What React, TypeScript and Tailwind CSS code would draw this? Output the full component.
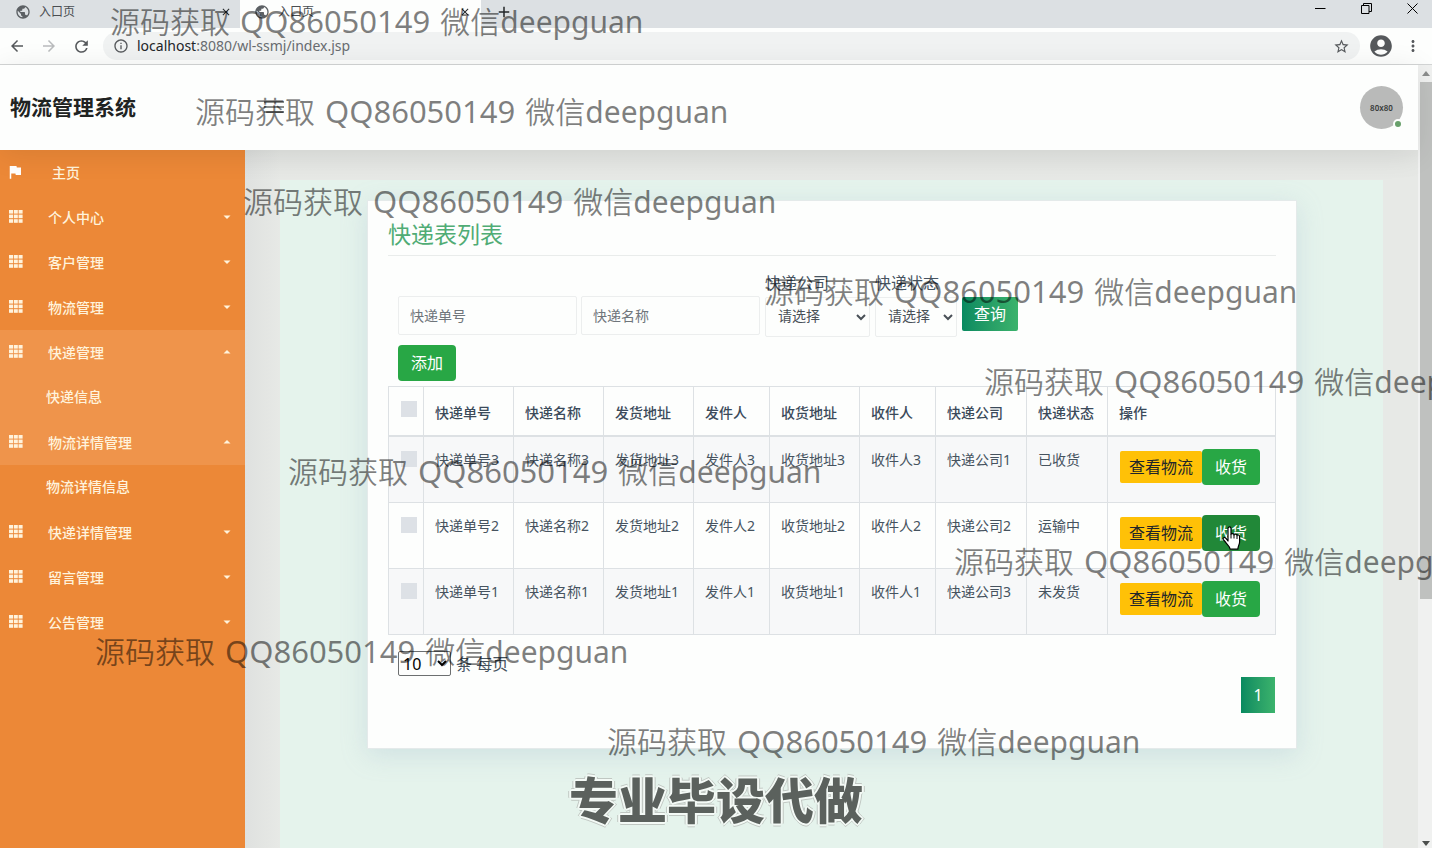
import React from "react";
import {
  MdAccountCircle,
  MdAdd,
  MdArrowBack,
  MdArrowForward,
  MdClose,
  MdFlag,
  MdInfoOutline,
  MdMoreVert,
  MdPublic,
  MdRefresh,
  MdStarBorder,
} from "react-icons/md";

type MenuItem = { label: string; open?: boolean; highlight?: boolean; child?: string; childHighlight?: boolean };

const menu: MenuItem[] = [
  { label: "个人中心" },
  { label: "客户管理" },
  { label: "物流管理" },
  { label: "快递管理", open: true, highlight: true, child: "快递信息", childHighlight: true },
  { label: "物流详情管理", open: true, highlight: true, child: "物流详情信息" },
  { label: "快递详情管理" },
  { label: "留言管理" },
  { label: "公告管理" },
];

const columns = ["快递单号", "快递名称", "发货地址", "发件人", "收货地址", "收件人", "快递公司", "快递状态"];

const rows = [
  ["快递单号3", "快递名称3", "发货地址3", "发件人3", "收货地址3", "收件人3", "快递公司1", "已收货"],
  ["快递单号2", "快递名称2", "发货地址2", "发件人2", "收货地址2", "收件人2", "快递公司2", "运输中"],
  ["快递单号1", "快递名称1", "发货地址1", "发件人1", "收货地址1", "收件人1", "快递公司3", "未发货"],
];

const marks = [
  "left-[110px] top-0",
  "left-[195px] top-[90px]",
  "left-[243px] top-[180px]",
  "left-[764px] top-[270px]",
  "left-[984px] top-[360px]",
  "left-[288px] top-[450px]",
  "left-[954px] top-[540px]",
  "left-[95px] top-[630px]",
  "left-[607px] top-[720px]",
];

function GridIcon() {
  return (
    <svg width="14" height="13" viewBox="0 0 14 13" fill="currentColor" aria-hidden="true">
      {[0, 4.6, 9.2].map((y) =>
        [0, 4.8, 9.6].map((x) => <rect key={`${x}-${y}`} x={x} y={y} width="4" height="3.6" />),
      )}
    </svg>
  );
}

function Caret({ up }: { up?: boolean }) {
  return (
    <svg width="8" height="4" viewBox="0 0 8 4" fill="currentColor" aria-hidden="true">
      <path d={up ? "M0.5 3.5 4 0l3.5 3.5z" : "M0.5 0.5 4 4l3.5-3.5z"} />
    </svg>
  );
}

function HandCursor() {
  return (
    <svg className="pointer-events-none absolute left-5 top-[11px]" width="19" height="25" viewBox="0 0 19 25" aria-hidden="true">
      <path
        d="M6 15V2.600C6 .4 9 .4 9 2.600V8.500c0-1.300 3-1.200 3 .5 0-1.300 3-1.200 3 .7 0-1.200 2.600-1 2.600.8V16c0 2.500-1.600 3.800-1.800 7.200H8.200C8 20.500 5 18.500 3.800 16.500L1.400 13.600c-1-1.700 1-2.900 2.300-1.500z"
        fill="#fff"
        stroke="#000"
        strokeWidth="1.2"
        strokeLinejoin="round"
      />
      <path d="M9 8.500V12.500M12 9v3.500M15 10V13" stroke="#000" strokeWidth="1" />
    </svg>
  );
}

function Tab({ active }: { active?: boolean }) {
  return (
    <div
      className={
        active
          ? "flex w-[241px] items-center bg-[#fdfefd] pl-3.5 pr-2.5"
          : "flex w-60 items-center pl-[15px] pr-2"
      }
    >
      <MdPublic className="size-4 text-[#5c6064]" />
      <span className="ml-2 flex-1 text-xs text-[#4a4e52]">入口页</span>
      <button type="button" aria-label="关闭标签页" className="text-[#24272a]">
        <MdClose className="size-3" />
      </button>
    </div>
  );
}

function BrowserBar() {
  return (
    <div className="shrink-0">
      <div className="flex h-7 bg-[#dce0e3]">
        <div className="flex h-6 flex-1">
          <Tab />
          <div className="-mb-1 flex bg-[#fdfefd] pb-1">
            <Tab active />
          </div>
          <button type="button" aria-label="新标签页" className="ml-3.5 text-[#24272a]">
            <MdAdd className="size-[18px]" />
          </button>
        </div>
        <div className="flex h-4 items-center gap-[35px] pr-3.5 text-black">
          <button type="button" aria-label="最小化">
            <svg width="11" height="11" viewBox="0 0 11 11" fill="none" stroke="currentColor"><path d="M0 5.500H10.500" /></svg>
          </button>
          <button type="button" aria-label="还原">
            <svg width="11" height="11" viewBox="0 0 11 11" fill="none" stroke="currentColor"><path d="M.5 2.500h7.500v8H.5zM2.500 2.500V.5h8v8H8" /></svg>
          </button>
          <button type="button" aria-label="关闭">
            <svg width="11" height="11" viewBox="0 0 11 11" fill="none" stroke="currentColor"><path d="M.5.5l10 10M10.500.5l-10 10" /></svg>
          </button>
        </div>
      </div>
      <div className="flex h-[37px] items-center border-b border-[#d3d5d5] bg-[#fdfefd] pl-2 pr-2.5 text-[#56595c]">
        <button type="button" aria-label="后退"><MdArrowBack className="size-[18px]" /></button>
        <button type="button" aria-label="前进" className="ml-3.5 text-[#b9bbbd]"><MdArrowForward className="size-[18px]" /></button>
        <button type="button" aria-label="刷新" className="ml-3.5"><MdRefresh className="size-[19px]" /></button>
        <div className="ml-3 flex h-7 flex-1 items-center rounded-full bg-[#f0f2f2] px-2.5">
          <MdInfoOutline className="size-4" />
          <p className="ml-2 flex-1 text-sm text-[#686c70]">
            <span className="text-[#222528]">localhost</span>:8080/wl-ssmj/index.jsp
          </p>
          <button type="button" aria-label="收藏"><MdStarBorder className="size-[17px]" /></button>
        </div>
        <button type="button" aria-label="账户" className="ml-2"><MdAccountCircle className="size-[26px]" /></button>
        <button type="button" aria-label="菜单" className="ml-2.5"><MdMoreVert className="size-[18px]" /></button>
      </div>
    </div>
  );
}

function Sidebar() {
  return (
    <nav className="w-[245px] shrink-0 bg-[#ec8837] text-sm font-medium text-[#fff3dc]">
      <a href="#home" className="flex h-[45px] items-center pl-1.5">
        <MdFlag className="mb-0.5 size-[18px] text-white" />
        <span className="ml-7">主页</span>
      </a>
      {menu.map((item) => (
        <div key={item.label}>
          <button
            type="button"
            aria-expanded={!!item.open}
            className={
              item.highlight
                ? "flex h-[45px] w-full items-center bg-[#ef944b] pl-[9px] pr-3.5"
                : "flex h-[45px] w-full items-center pl-[9px] pr-3.5"
            }
          >
            <span className="pb-0.5"><GridIcon /></span>
            <span className="ml-[25px] flex-1 text-left">{item.label}</span>
            <span className="pb-0.5"><Caret up={item.open} /></span>
          </button>
          {item.child && (
            <a
              href="#sub"
              className={
                item.childHighlight
                  ? "flex h-[45px] items-center bg-[#ef944b] pb-0.5 pl-[46px]"
                  : "flex h-[45px] items-center pb-0.5 pl-[46px]"
              }
            >
              {item.child}
            </a>
          )}
        </div>
      ))}
    </nav>
  );
}

function Filters() {
  const inputClass =
    "h-[39px] w-[179px] rounded-xs border border-[#eceeee] bg-transparent px-[11px] text-sm text-[#495057] placeholder:text-[#6f757b]";
  return (
    <form className="flex items-end gap-[5px] pl-2.5" onSubmit={(e) => e.preventDefault()}>
      <div className="flex gap-1 pb-0.5">
        <input aria-label="快递单号" placeholder="快递单号" className={inputClass} />
        <input aria-label="快递名称" placeholder="快递名称" className={inputClass} />
      </div>
      <label className="flex flex-col text-base leading-6">
        快递公司
        <select className="mt-0.5 h-10 w-[105px] rounded-xs border border-[#eceeee] bg-transparent px-2 pb-1 text-sm text-[#495057]">
          <option>请选择</option>
        </select>
      </label>
      <label className="flex flex-col text-base leading-6">
        快递状态
        <select className="mt-0.5 h-10 w-[82px] rounded-xs border border-[#eceeee] bg-transparent px-2 pb-1 text-sm text-[#495057]">
          <option>请选择</option>
        </select>
      </label>
      <div className="pb-1.5">
        <button type="submit" className="h-[34px] w-14 rounded-xs bg-linear-to-r from-[#078a60] to-[#3bb36c] text-base text-white">
          查询
        </button>
      </div>
    </form>
  );
}

function Check({ label }: { label: string }) {
  return <input type="checkbox" aria-label={label} className="block size-4 appearance-none bg-[#dde1e6]" />;
}

function ExpressTable() {
  return (
    <table className="w-full table-fixed border-collapse text-left text-sm text-[#46535f]">
      <colgroup>
        <col className="w-[35px]" />
        <col className="w-[90px]" />
        <col className="w-[90px]" />
        <col className="w-[90px]" />
        <col className="w-[76px]" />
        <col className="w-[90px]" />
        <col className="w-[76px]" />
        <col className="w-[91px]" />
        <col className="w-[81px]" />
        <col />
      </colgroup>
      <thead>
        <tr className="h-[49px]">
          <th className="border border-b-2 border-[#dde1e4] pb-1 pl-3"><Check label="全选" /></th>
          {columns.map((c) => (
            <th key={c} className="whitespace-nowrap border border-b-2 border-[#dde1e4] pl-[11px] pt-1 font-medium text-[#3b4a5a]">
              {c}
            </th>
          ))}
          <th className="border border-b-2 border-[#dde1e4] pl-[11px] pt-1 font-medium text-[#3b4a5a]">操作</th>
        </tr>
      </thead>
      <tbody>
        {rows.map((r, i) => (
          <tr key={r[0]} className="h-[66px] odd:bg-[#f7f8f9] first:h-[67px]">
            <td className="border border-[#dde1e4] pl-3 pt-3.5 align-top"><Check label={r[0]} /></td>
            {r.map((c) => (
              <td key={c} className="whitespace-nowrap border border-[#dde1e4] pl-[11px] pt-[13px] align-top">{c}</td>
            ))}
            <td className="border border-[#dde1e4] pl-3 pt-3 align-top">
              <div className="flex items-center">
                <button type="button" className="h-8 w-[82px] rounded-xs bg-[#ffc107] text-base text-[#212529]">
                  查看物流
                </button>
                <div className="relative">
                  <button
                    type="button"
                    className={
                      i === 1
                        ? "h-9 w-[58px] rounded-sm bg-[#218838] text-base text-white"
                        : "h-9 w-[58px] rounded-sm bg-[#28a745] text-base text-white"
                    }
                  >
                    收货
                  </button>
                  {i === 1 && <HandCursor />}
                </div>
              </div>
            </td>
          </tr>
        ))}
      </tbody>
    </table>
  );
}

export default function App() {
  return (
    <div className="relative flex h-screen flex-col overflow-hidden bg-[#fdfefd] font-['Noto_Sans','Noto_Sans_CJK_SC',sans-serif] text-[#46535f]">
      <BrowserBar />
      <div className="flex min-h-0 flex-1">
        <div className="flex min-w-0 flex-1 flex-col">
          <header className="relative flex h-[85px] shrink-0 items-center bg-[#fdfefd] pl-2.5 pr-[15px] shadow-[0_4px_30px_rgba(0,0,0,0.09)]">
            <h1 className="w-[254px] text-[21px] font-bold text-[#202322]">物流管理系统</h1>
            <button type="button" aria-label="切换菜单" className="text-[#8a8d8b]">
              <svg width="20" height="13" viewBox="0 0 20 13" fill="none" stroke="currentColor" strokeWidth="2" aria-hidden="true">
                <path d="M0 1h20M0 6h20M0 11h20" />
              </svg>
            </button>
            <div className="relative ml-auto flex size-[43px] items-center justify-center rounded-full bg-[#b9bab9] text-[8px] font-semibold text-[#383a39]">
              80x80
              <span className="absolute bottom-0 right-0 size-2.5 rounded-full border-2 border-[#fdfefd] bg-[#68a06b]" />
            </div>
          </header>
          <div className="flex min-h-0 flex-1">
            <Sidebar />
            <main className="flex min-w-0 flex-1 bg-[linear-gradient(to_bottom,rgba(0,0,0,0.02),transparent_30px),linear-gradient(to_right,#dfe1df,#e7e9e6_35px)] px-[35px] pt-[30px]">
              <div className="flex-1 bg-[#e5f3ec] pl-[87px] pr-[86px] pt-5">
                <section className="border border-[#e4eaea] bg-[#fdfefd] px-5 pb-[35px] pt-4 shadow-[0_6px_24px_rgba(150,180,200,0.28)]">
                  <h2 className="border-b border-[#e9eceb] pb-1 text-[23px] leading-[34px] text-[#50ac75]">快递表列表</h2>
                  <div className="pt-[15px]">
                    <Filters />
                  </div>
                  <div className="pb-[5px] pl-2.5 pt-2">
                    <button type="button" className="block h-9 w-[58px] rounded-sm bg-[#28a745] text-base text-white">
                      添加
                    </button>
                  </div>
                  <ExpressTable />
                  <label className="mb-px mt-4 flex items-center gap-[5px] pl-2.5 text-base">
                    <select className="h-[25px] w-[53px] rounded-xs border border-[#6c6f70] bg-transparent text-base text-black">
                      <option>10</option>
                    </select>
                    条 每页
                  </label>
                  <div className="flex justify-end pr-px">
                    <button type="button" className="h-9 w-[34px] bg-linear-to-r from-[#078a60] to-[#3bb36c] text-base text-white">
                      1
                    </button>
                  </div>
                </section>
              </div>
            </main>
          </div>
        </div>
        <div className="flex w-3.5 shrink-0 flex-col items-center bg-[#f0f1f0] pl-0.5">
          <svg className="my-1.5 shrink-0" width="8" height="5" viewBox="0 0 8 5" fill="#8b8d8c" aria-hidden="true"><path d="M0 5 4 0l4 5z" /></svg>
          <div className="h-[66%] w-full bg-[#bfc1bf]" />
          <svg className="mb-0.5 mt-auto shrink-0" width="8" height="5" viewBox="0 0 8 5" fill="#4c4f4d" aria-hidden="true"><path d="M0 0 4 5l4-5z" /></svg>
        </div>
      </div>

      <div className="pointer-events-none absolute inset-0 overflow-hidden">
        {marks.map((m) => (
          <p key={m} className={`absolute flex items-baseline gap-2.5 whitespace-nowrap text-[30px] font-[350] leading-[42px] text-black/50 ${m}`}>
            <span>源码获取</span>
            <span className="text-[31px] font-normal">QQ86050149</span>
            <span>
              微信<span className="font-normal">deepguan</span>
            </span>
          </p>
        ))}
        <p className="absolute inset-x-0 bottom-3 text-center text-[49px] font-black leading-[72px] text-[#5b615d] [text-shadow:2px_0_#f4faf6,-2px_0_#f4faf6,0_2px_#f4faf6,0_-2px_#f4faf6,1px_1px_#f4faf6,-1px_-1px_#f4faf6,1px_-1px_#f4faf6,-1px_1px_#f4faf6,3px_0_#c0c7c2,-3px_0_#c0c7c2,0_3px_#c0c7c2,0_-3px_#c0c7c2]">
          专业毕设代做
        </p>
      </div>
    </div>
  );
}
